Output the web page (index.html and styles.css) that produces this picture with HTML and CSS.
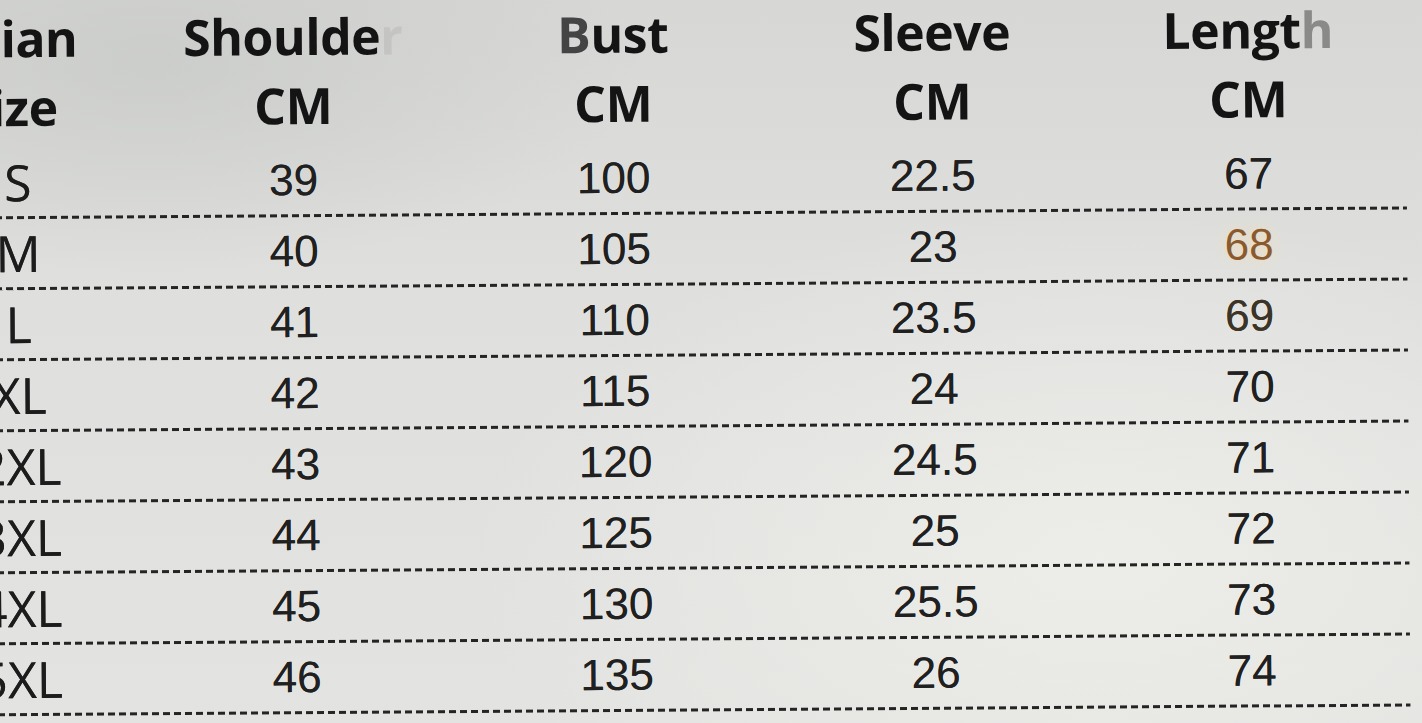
FILE: index.html
```html
<!DOCTYPE html>
<html lang="en">
<head>
<meta charset="utf-8">
<title>Size Chart</title>
<link rel="stylesheet" href="styles.css">
</head>
<body>
<div class="photo">
  <div class="sheet">
    <div class="row head head-1">
      <div class="cell size-col">Asian</div>
      <div class="cell">Shoulde<span class="fade">r</span></div>
      <div class="cell"><span class="fade-b">B</span>ust</div>
      <div class="cell">Sleeve</div>
      <div class="cell">Lengt<span class="fade-h">h</span></div>
    </div>
    <div class="row head head-2">
      <div class="cell size-col">Size</div>
      <div class="cell">CM</div>
      <div class="cell">CM</div>
      <div class="cell">CM</div>
      <div class="cell">CM</div>
    </div>
    <div class="row data"><div class="cell size">S</div><div class="cell">39</div><div class="cell">100</div><div class="cell">22.5</div><div class="cell">67</div></div>
    <div class="row data"><div class="cell size">M</div><div class="cell">40</div><div class="cell">105</div><div class="cell">23</div><div class="cell warm">68</div></div>
    <div class="row data"><div class="cell size">L</div><div class="cell">41</div><div class="cell">110</div><div class="cell">23.5</div><div class="cell warm-2">69</div></div>
    <div class="row data"><div class="cell size">XL</div><div class="cell">42</div><div class="cell">115</div><div class="cell">24</div><div class="cell">70</div></div>
    <div class="row data"><div class="cell size">2XL</div><div class="cell">43</div><div class="cell">120</div><div class="cell">24.5</div><div class="cell">71</div></div>
    <div class="row data"><div class="cell size">3XL</div><div class="cell">44</div><div class="cell">125</div><div class="cell">25</div><div class="cell">72</div></div>
    <div class="row data"><div class="cell size">4XL</div><div class="cell">45</div><div class="cell">130</div><div class="cell">25.5</div><div class="cell">73</div></div>
    <div class="row data"><div class="cell size">5XL</div><div class="cell">46</div><div class="cell">135</div><div class="cell">26</div><div class="cell">74</div></div>
  </div>
</div>
</body>
</html>
```
FILE: styles.css
```css
html, body {
  margin: 0;
  padding: 0;
  width: 1422px;
  height: 723px;
  overflow: hidden;
}

body {
  background:
    radial-gradient(ellipse 900px 500px at 1100px 560px, rgba(238, 238, 234, 0.9), rgba(238, 238, 234, 0) 70%),
    radial-gradient(ellipse 700px 300px at 150px 60px, rgba(198, 200, 198, 0.7), rgba(198, 200, 198, 0) 70%),
    linear-gradient(180deg, #d7d8d6 0%, #dfe0de 40%, #e3e4e1 100%);
}

.photo {
  width: 1422px;
  height: 723px;
  overflow: hidden;
}

.sheet {
  margin-left: -92px;
  width: 1500px;
  transform: rotate(-0.4deg);
  transform-origin: 700px 360px;
  display: flex;
  flex-direction: column;
}

.row {
  display: grid;
  grid-template-columns: 228px 318px 322px 316px 316px;
  align-items: center;
}

.cell {
  text-align: center;
  white-space: nowrap;
}

.head {
  font-family: "Open Sans", "DejaVu Sans", sans-serif;
  font-weight: 700;
  font-size: 50px;
  color: #141414;
  letter-spacing: -0.5px;
}

.head-1 {
  height: 64px;
}

.head-2 {
  height: 80px;
}

.head .size-col {
  padding-right: 20px;
}

.head-1 .cell {
  padding-bottom: 6px;
}

.head-2 .cell {
  padding-bottom: 2px;
}

.fade {
  color: #c4c4c2;
}

.fade-b {
  color: #444;
}

.fade-h {
  color: #8a8a88;
}

.data {
  height: 71px;
  font-family: "Liberation Sans", Arial, sans-serif;
  font-size: 44px;
  color: #202020;
  text-shadow: 0 0 0.6px rgba(20, 20, 20, 0.8);
  background-image: repeating-linear-gradient(90deg, #242424 0 7px, transparent 7px 11px);
  background-size: 100% 3px;
  background-position: 0 100%;
  background-repeat: no-repeat;
}

.data .cell {
  padding-bottom: 3px;
}

.data .size {
  font-family: "Open Sans", "DejaVu Sans", sans-serif;
  font-size: 50px;
  padding-right: 6px;
  color: #1c1c1c;
}

.warm {
  color: #8a5a2c;
  text-shadow: 0 0 14px rgba(255, 220, 160, 0.7);
}

.warm-2 {
  color: #3c3424;
}
```
